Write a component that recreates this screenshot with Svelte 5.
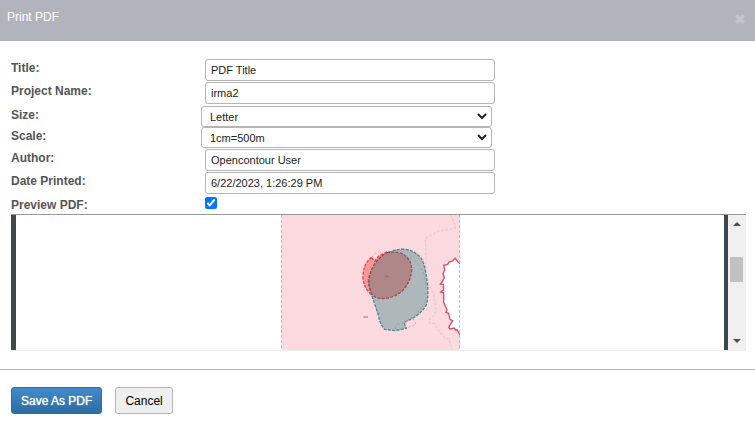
<script>
  let title = 'PDF Title';
  let project = 'irma2';
  let size = 'Letter';
  let scale = '1cm=500m';
  let author = 'Opencontour User';
  let datePrinted = '6/22/2023, 1:26:29 PM';
  let preview = true;
  let open = true;

  const sizes = ['Letter', 'Legal', 'Tabloid', 'A4', 'A3'];
  const scales = ['1cm=100m', '1cm=250m', '1cm=500m', '1cm=1000m'];

  function close() {
    open = false;
  }
</script>

{#if open}
  <div class="dialog" role="dialog" aria-labelledby="dialog-title">
    <header>
      <h1 id="dialog-title">Print PDF</h1>
      <button class="close" aria-label="Close" on:click={close}>
        <svg width="10" height="10" viewBox="0 0 10 10">
          <path d="M1.2 1.2 L8.8 8.8 M8.8 1.2 L1.2 8.8" />
        </svg>
      </button>
    </header>

    <form on:submit|preventDefault>
      <div class="row">
        <label for="title">Title:</label>
        <input id="title" type="text" bind:value={title} />
      </div>
      <div class="row">
        <label for="project">Project Name:</label>
        <input id="project" type="text" bind:value={project} />
      </div>
      <div class="selects">
        <div class="row">
          <label for="size">Size:</label>
          <span class="select">
            <select id="size" bind:value={size}>
              {#each sizes as s}
                <option>{s}</option>
              {/each}
            </select>
            <svg width="10" height="7" viewBox="0 0 10 7"><path d="M1 1 L5 5 L9 1" /></svg>
          </span>
        </div>
        <div class="row">
          <label for="scale">Scale:</label>
          <span class="select">
            <select id="scale" bind:value={scale}>
              {#each scales as s}
                <option>{s}</option>
              {/each}
            </select>
            <svg width="10" height="7" viewBox="0 0 10 7"><path d="M1 1 L5 5 L9 1" /></svg>
          </span>
        </div>
      </div>
      <div class="row">
        <label for="author">Author:</label>
        <input id="author" type="text" bind:value={author} />
      </div>
      <div class="row">
        <label for="date">Date Printed:</label>
        <input id="date" type="text" bind:value={datePrinted} />
      </div>
      <div class="row check">
        <label for="preview">Preview PDF:</label>
        <input id="preview" type="checkbox" bind:checked={preview} />
      </div>

      {#if preview}
        <div class="preview">
          <div class="page">
            <svg class="map" width="179" height="135" viewBox="33 30 537 405">
              <rect x="33" y="30" width="537" height="405" fill="#fadadf" />
              <!-- district boundary -->
              <path
                class="boundary"
                d="M541 30 L548 43 L555 58 L556 69 L535 74 L509 77 L485 89 L465 101 L468 130 L468 180 L469 214 L478 240 L485 257 L492 270 L495 290 L499 316 L494 329 L477 345 L478 354 L493 356 L502 371 L516 389 L526 400 L538 402 L539 416 L546 426 L546 435"
              />
              <path
                class="coast"
                d="M570 176 L563 170 L556 160 L548 168 L537 171 L533 178 L521 181 L524 194 L519 207 L523 218 L517 230 L511 237 L520 238 L521 254 L512 261 L521 264 L521 292 L527 306 L531 313 L528 322 L536 325 L540 343 L548 347 L542 356 L536 367 L540 372 L553 369 L557 376 L561 374 L570 390"
              />
              <!-- notches -->
              <path class="notch" d="M304 158 L315 145 L329 137 L334 146 L319 158" />
              <path class="notch" d="M403 354 L417 347 L433 343 L438 358 L424 363 L409 369" />
              <!-- buffer zones -->
              <path
                class="red"
                d="M304 158 L314 168 L327 153 L350 141 Q385 138 403 150 Q425 166 425 194 Q422 232 396 259 Q364 284 329 280 Q306 276 299 264 Q281 247 279 216 Q280 175 304 158 Z"
              />
              <path
                class="teal"
                d="M357 144 Q374 131 407 133 Q437 138 455 162 Q466 182 471 228 Q477 262 470 298 Q455 325 426 341 L402 352 L409 370 L375 377 L344 373 Q329 357 325 330 L305 270 Q291 230 297 216 Q306 183 327 162 Z"
              />
              <path
                class="overlap"
                d="M350 143 Q385 138 403 150 Q425 166 425 194 Q422 232 396 259 Q364 284 329 280 Q311 277 304 265 Q298 245 296 228 Q302 190 321 168 Q337 151 350 143 Z"
              />
              <path class="inner" d="M361 148 Q413 143 441 174 Q466 200 467 242 Q472 283 459 303 Q435 334 403 354 L378 358 L375 374" />
              <path class="label" d="M345 214 H358 M280 336 H294" />
              <path class="edge" d="M34 30 V435 M569 30 V435" />
            </svg>
          </div>
          <div class="scrollbar">
            <button type="button" aria-label="Scroll up">
              <svg width="8" height="4" viewBox="0 0 8 4"><path d="M0 4 L4 0 L8 4 Z" /></svg>
            </button>
            <div class="track"><div class="thumb"></div></div>
            <button type="button" aria-label="Scroll down">
              <svg width="8" height="4" viewBox="0 0 8 4"><path d="M0 0 L4 4 L8 0 Z" /></svg>
            </button>
          </div>
        </div>
      {/if}
    </form>

    <footer>
      <button class="btn primary">Save As PDF</button>
      <button class="btn" on:click={close}>Cancel</button>
    </footer>
  </div>
{/if}

<style>
  :global(body) {
    margin: 0;
    background: #fff;
    font-family: 'Liberation Sans', Arial, sans-serif;
  }
  header {
    display: flex;
    justify-content: space-between;
    align-items: flex-start;
    height: 41px;
    box-sizing: border-box;
    padding: 8px 10px 0 7px;
    background: #b1b4bd;
  }
  h1 {
    margin: 0;
    font-size: 12px;
    line-height: 18px;
    font-weight: normal;
    color: #fff;
  }
  .close {
    display: flex;
    margin: 0;
    padding: 6px 0;
    border: none;
    background: none;
    cursor: pointer;
  }
  .close path {
    stroke: #c5c8d0;
    stroke-width: 3;
    fill: none;
  }
  form {
    padding: 18px 9px 18px 11px;
    border-bottom: 1px solid #b5b5b5;
  }
  .row {
    display: flex;
    align-items: flex-start;
    height: 23px;
  }
  label {
    width: 194px;
    flex: none;
    font-size: 12px;
    line-height: 18px;
    font-weight: bold;
    color: #555;
  }
  input[type='text'] {
    width: 290px;
    height: 22px;
    box-sizing: border-box;
    margin: 0;
    padding: 0 5px;
    border: 1px solid #b5b5b5;
    border-radius: 3px;
    background: #fff;
    color: #222;
    font-family: inherit;
    font-size: 11px;
  }
  .selects {
    margin: 1px 0;
  }
  .selects .row {
    height: 21px;
  }
  .selects label {
    width: 190px;
  }
  .select {
    position: relative;
    display: flex;
  }
  select {
    appearance: none;
    width: 291px;
    height: 21px;
    box-sizing: border-box;
    margin: 0;
    padding: 0 20px 0 8px;
    border: 1px solid #b5b5b5;
    border-radius: 3px;
    background: #fff;
    color: #222;
    font-family: inherit;
    font-size: 11px;
  }
  .select svg {
    position: absolute;
    right: 5px;
    top: 7px;
    pointer-events: none;
  }
  .select path {
    fill: none;
    stroke: #222;
    stroke-width: 2;
  }
  .check {
    height: 18px;
    padding-top: 1px;
  }
  input[type='checkbox'] {
    width: 12px;
    height: 12px;
    margin: 1px 0;
    accent-color: #0075ff;
  }
  .preview {
    display: flex;
    height: 135px;
    border-top: 1px solid #999;
    border-bottom: 1px solid #eee;
  }
  .page {
    flex: 1;
    display: flex;
    justify-content: center;
    border-left: 5px solid #43484b;
    border-right: 4px solid #3d474c;
    background: #fff;
    overflow: hidden;
  }
  .map {
    flex: none;
  }
  .boundary,
  .notch {
    fill: none;
    stroke: #f4bfca;
    stroke-width: 3;
    stroke-dasharray: 8 5;
  }
  .coast {
    fill: #fff;
    stroke: #dc4c68;
    stroke-width: 4;
  }
  .notch {
    stroke: #f2adb8;
  }
  .red {
    fill: #ff9797;
    stroke: #e8404a;
    stroke-width: 4;
    stroke-dasharray: 9 4;
  }
  .teal {
    fill: #aeb7ba;
    stroke: #4f868f;
    stroke-width: 4;
    stroke-dasharray: 9 4;
  }
  .overlap {
    fill: #b08789;
    stroke: #a04a52;
    stroke-width: 4;
    stroke-dasharray: 9 4;
  }
  .inner {
    fill: none;
    stroke: #8ba3a8;
    stroke-width: 2;
    stroke-dasharray: 9 6;
  }
  .label {
    stroke: #8b6a70;
    stroke-width: 5;
    opacity: 0.6;
  }
  .edge {
    stroke: #c2b0b3;
    stroke-width: 3;
    stroke-dasharray: 9 6;
  }
  .scrollbar {
    display: flex;
    flex-direction: column;
    width: 18px;
    background: #f0f0f0;
  }
  .scrollbar button {
    display: flex;
    align-items: center;
    justify-content: center;
    height: 18px;
    margin: 0;
    padding: 0;
    border: none;
    background: none;
  }
  .scrollbar path {
    fill: #505050;
  }
  .track {
    flex: 1;
    padding: 24px 3px 0 2px;
  }
  .thumb {
    height: 25px;
    background: #c1c1c1;
  }
  footer {
    display: flex;
    gap: 13px;
    padding: 17px 11px;
  }
  .btn {
    height: 27px;
    padding: 0 9px;
    border: 1px solid #b5b5b5;
    border-radius: 3px;
    background: #efefef;
    color: #000;
    font-family: inherit;
    font-size: 12px;
    cursor: pointer;
  }
  .primary {
    border-color: #2d6ca2;
    background: linear-gradient(#428bca, #2d6ca2);
    color: #fff;
    text-shadow: 0 0 1px #fff;
  }
</style>
